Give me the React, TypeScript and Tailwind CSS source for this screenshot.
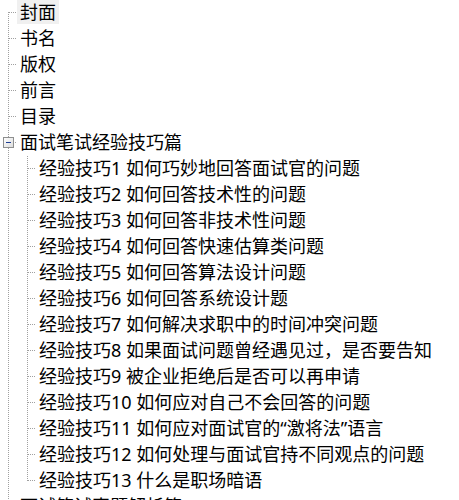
import React from "react";

type Line = "first" | "mid" | "last" | "pass" | "none";

const DOT = "#a0a0a0";

function Connector({ line, branch = true, box }: { line: Line; branch?: boolean; box?: "minus" | "plus" }) {
  const w = branch ? 17 : 19;
  const y1 = line === "first" ? 12 : 0;
  const y2 = line === "last" ? 13 : 26;
  return (
    <svg width={w} height={26} className="shrink-0 block" shapeRendering="crispEdges">
      {line !== "none" && (
        <line x1={8.5} y1={y1} x2={8.5} y2={y2} stroke={DOT} strokeDasharray="1 1" />
      )}
      {branch && <line x1={9} y1={12.5} x2={17} y2={12.5} stroke={DOT} strokeDasharray="1 1" />}
      {box && (
        <g>
          <defs>
            <linearGradient id="exp" x1="0" y1="0" x2="1" y2="1">
              <stop offset="0" stopColor="#ffffff" />
              <stop offset="1" stopColor="#dcdcdc" />
            </linearGradient>
          </defs>
          <rect x={3.5} y={7.5} width={10} height={10} fill="url(#exp)" stroke="#8e8f8f" />
          <line x1={6} y1={12.5} x2={11} y2={12.5} stroke="#1e3f95" />
          {box === "plus" && <line x1={8.5} y1={10} x2={8.5} y2={15} stroke="#1e3f95" />}
        </g>
      )}
    </svg>
  );
}

function Label({ text, selected }: { text: string; selected?: boolean }) {
  return (
    <span
      className={
        "h-[24px] self-start px-[3px] flex items-center whitespace-nowrap text-[18px] leading-none text-black " +
        (selected ? "bg-[#f0f0f0]" : "")
      }
    >
      {text}
    </span>
  );
}

const roots = ["封面", "书名", "版权", "前言", "目录"];

const children = [
  "经验技巧1 如何巧妙地回答面试官的问题",
  "经验技巧2 如何回答技术性的问题",
  "经验技巧3 如何回答非技术性问题",
  "经验技巧4 如何回答快速估算类问题",
  "经验技巧5 如何回答算法设计问题",
  "经验技巧6 如何回答系统设计题",
  "经验技巧7 如何解决求职中的时间冲突问题",
  "经验技巧8 如果面试问题曾经遇见过，是否要告知",
  "经验技巧9 被企业拒绝后是否可以再申请",
  "经验技巧10 如何应对自己不会回答的问题",
  "经验技巧11 如何应对面试官的“激将法”语言",
  "经验技巧12 如何处理与面试官持不同观点的问题",
  "经验技巧13 什么是职场暗语",
];

export default function App() {
  return (
    <div
      className="w-[459px] h-[500px] overflow-hidden bg-white"
      style={{ fontFamily: '"Noto Sans", "Noto Sans CJK SC", sans-serif' }}
    >
      {roots.map((r, i) => (
        <div key={r} className="flex h-[26px]">
          <Connector line={i === 0 ? "first" : "mid"} />
          <Label text={r} selected={i === 0} />
        </div>
      ))}
      <div className="flex h-[26px]">
        <Connector line="mid" box="minus" />
        <Label text="面试笔试经验技巧篇" />
      </div>
      {children.map((c, i) => (
        <div key={c} className="flex h-[26px]">
          <Connector line="mid" branch={false} />
          <Connector line={i === children.length - 1 ? "last" : "mid"} />
          <Label text={c} />
        </div>
      ))}
      <div className="flex h-[26px]">
        <Connector line="mid" box="plus" />
        <Label text="面试笔试真题解析篇" />
      </div>
    </div>
  );
}
